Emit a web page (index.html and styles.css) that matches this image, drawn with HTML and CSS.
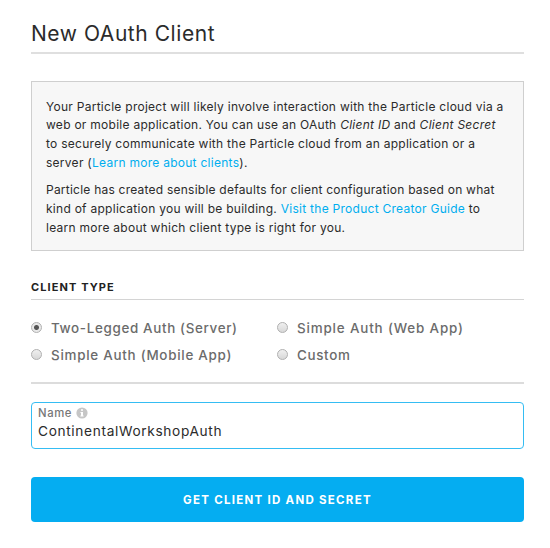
FILE: index.html
```html
<!DOCTYPE html>
<html lang="en">
<head>
<meta charset="utf-8">
<title>New OAuth Client</title>
<link rel="stylesheet" href="styles.css">
</head>
<body>
<main class="page">
<h1 class="title">New OAuth Client</h1>
<section class="notice">
<p>Your Particle project will likely involve interaction with the Particle cloud via a<br>web or mobile application. You can use an OAuth <em>Client ID</em> and <em>Client Secret</em><br>to securely communicate with the Particle cloud from an application or a<br>server (<a>Learn more about clients</a>).</p>
<p><span class="tight">Particle has created sensible defaults for client configuration based on what</span><br>kind of application you will be building. <a>Visit the Product Creator Guide</a> to<br>learn more about which client type is right for you.</p>
</section>
<h2 class="section-title">CLIENT TYPE</h2>
<div class="options">
<label class="option"><span class="radio checked"></span><span>Two-Legged Auth (Server)</span></label>
<label class="option"><span class="radio"></span><span class="wide">Simple Auth (Web App)</span></label>
<label class="option"><span class="radio"></span><span class="mid">Simple Auth (Mobile App)</span></label>
<label class="option"><span class="radio"></span><span>Custom</span></label>
</div>
<div class="field">
<div class="field-label"><span>Name</span><svg class="info" viewBox="0 0 12 12"><circle cx="6" cy="6" r="5.6" fill="#c6c6c6"/><path d="M5 2.2h2v1.6H5zM4.5 4.9H7v3.6h.6v1H4.4v-1H5V5.9h-.5z" fill="#fff"/></svg></div>
<div class="field-value">ContinentalWorkshopAuth</div>
</div>
<button class="submit">GET CLIENT ID AND SECRET</button>
</main>
</body>
</html>
```
FILE: styles.css
```css
* { box-sizing: border-box; }
body { margin: 0; background: #fff; color: #2b2b2b; font-family: Inter, "Liberation Sans", sans-serif; }
.page { width: 493px; margin-left: 31px; padding-top: 20px; }
.title { margin: 0; height: 34px; border-bottom: 2px solid #dfdfdf; font-size: 21px; line-height: 27px; font-weight: 400; letter-spacing: .55px; white-space: nowrap; }
.notice { height: 170px; margin-top: 27px; padding: 15.6px 14px 0; border: 1px solid #cfcfcf; background: #f7f7f7; font-size: 12px; line-height: 18.67px; letter-spacing: .27px; white-space: nowrap; }
.notice p { margin: 0 0 9px; }
.notice a { color: #00aeef; }
.tight { letter-spacing: .23px; }
.section-title { height: 20px; margin: 29px 0 0; border-bottom: 1px solid #d4d4d4; font-size: 11px; line-height: 14px; font-weight: 700; letter-spacing: 1.1px; color: #222; }
.options { display: grid; grid-template-columns: 246px 1fr; grid-auto-rows: 27px; height: 84px; padding-top: 14px; border-bottom: 2px solid #dcdcdc; }
.option { display: flex; align-items: center; gap: 9px; font-size: 13.4px; font-weight: 500; letter-spacing: .66px; color: #6b6b6b; white-space: nowrap; }
.wide { letter-spacing: .85px; }
.mid { letter-spacing: .74px; }
.radio { flex: none; width: 11px; height: 11px; border: 1px solid #b0b0b0; border-radius: 50%; background: linear-gradient(#f0f0f0, #d8d8d8); }
.checked { background: radial-gradient(circle, #555 0 2px, #e8e8e8 3px); }
.field { height: 47px; margin-top: 18px; padding: 2px 7px 0 6px; border: 1px solid #35bdf3; border-radius: 4px; }
.field-label { display: flex; align-items: center; gap: 4px; height: 16px; font-size: 11.3px; font-weight: 500; letter-spacing: .6px; color: #777; }
.info { width: 12px; height: 12px; }
.field-value { font-size: 13.7px; line-height: 20px; letter-spacing: .65px; }
.submit { display: block; width: 493px; height: 45px; margin-top: 28px; padding: 0; border: 0; border-radius: 4px; background: #05adf1; color: #fff; font: 700 11.5px Inter, sans-serif; letter-spacing: 1.27px; }
```
